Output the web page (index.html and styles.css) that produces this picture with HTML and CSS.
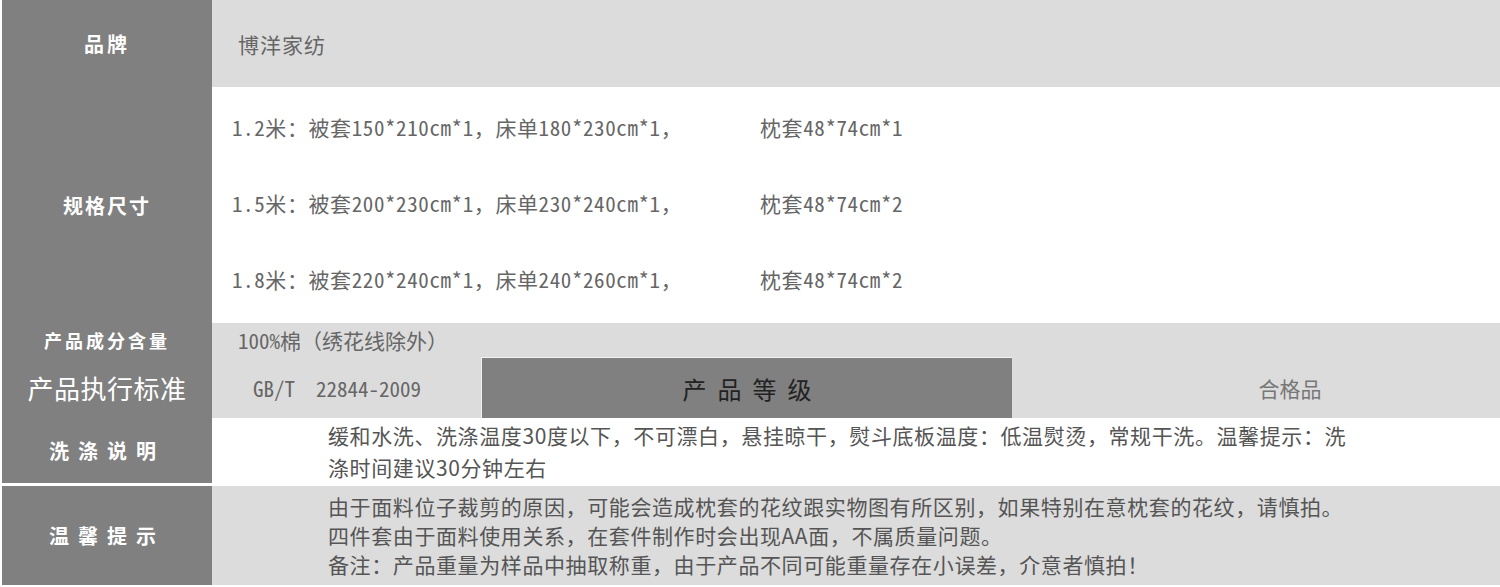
FILE: index.html
```html
<!DOCTYPE html>
<html lang="zh-CN">
<head>
    <meta charset="UTF-8">
    <meta name="viewport" content="width=device-width, initial-scale=1.0">
    <title>产品信息</title>
    <link rel="stylesheet" href="styles.css">
</head>
<body>

    <div class="sheet">
        <div class="row row-brand">
            <div class="label">品牌</div>
            <div class="value value-grey">博洋家纺</div>
        </div>

        <div class="row row-size">
            <div class="label">规格尺寸</div>
            <div class="value size-list">
                <div class="size-line"><span class="size-main">1.2米：被套150*210cm*1，床单180*230cm*1，</span><span>枕套48*74cm*1</span></div>
                <div class="size-line"><span class="size-main">1.5米：被套200*230cm*1，床单230*240cm*1，</span><span>枕套48*74cm*2</span></div>
                <div class="size-line"><span class="size-main">1.8米：被套220*240cm*1，床单240*260cm*1，</span><span>枕套48*74cm*2</span></div>
            </div>
        </div>

        <div class="row row-material">
            <div class="label label-small">产品成分含量</div>
            <div class="value value-grey mono">100%棉（绣花线除外）</div>
        </div>

        <div class="row row-standard">
            <div class="label label-large">产品执行标准</div>
            <div class="value value-grey standard">
                <div class="std-code mono">GB/T&nbsp;&nbsp;22844-2009</div>
                <div class="grade-title">产品等级</div>
                <div class="grade-value">合格品</div>
            </div>
        </div>

        <div class="row row-wash">
            <div class="label label-spaced">洗涤说明</div>
            <div class="value note">
                缓和水洗、洗涤温度30度以下，不可漂白，悬挂晾干，熨斗底板温度：低温熨烫，常规干洗。温馨提示：洗<br>
                涤时间建议30分钟左右
            </div>
        </div>

        <div class="row row-tips">
            <div class="label label-spaced">温馨提示</div>
            <div class="value value-grey note tips">
                由于面料位子裁剪的原因，可能会造成枕套的花纹跟实物图有所区别，如果特别在意枕套的花纹，请慎拍。<br>
                四件套由于面料使用关系，在套件制作时会出现AA面，不属质量问题。<br>
                备注：产品重量为样品中抽取称重，由于产品不同可能重量存在小误差，介意者慎拍！
            </div>
        </div>
    </div>

</body>
</html>
```

FILE: styles.css
```css
body {
    margin: 0;
    padding: 0;
    background: #fff;
    font-family: "Noto Sans CJK SC", "Noto Sans", sans-serif;
    color: #666;
}
.sheet {
    padding-left: 2px;
}
.row {
    display: grid;
    grid-template-columns: 210px 1fr;
}
.label {
    background-color: #808080;
    color: #fff;
    font-size: 20px;
    font-weight: bold;
    letter-spacing: 2px;
    display: flex;
    align-items: center;
    justify-content: center;
}
.label-small {
    font-size: 18px;
    letter-spacing: 3px;
}
.label-large {
    font-size: 26px;
    font-weight: normal;
    letter-spacing: 0.5px;
}
.label-spaced {
    letter-spacing: 9px;
}
.value {
    display: flex;
    align-items: center;
    font-size: 21px;
}
.value-grey {
    background-color: #dcdcdc;
}
.mono {
    font-family: "Noto Sans Mono CJK SC", "Noto Sans CJK SC", "Liberation Mono", monospace;
}

.row-brand {
    height: 87px;
}
.row-brand .label {
    letter-spacing: 3px;
}
.row-brand .value {
    padding-left: 26px;
    letter-spacing: 1px;
}

.row-size {
    height: 236px;
}
.size-list {
    flex-direction: column;
    align-items: flex-start;
    justify-content: flex-start;
    padding: 25px 0 0 20px;
    gap: 46px;
    font-family: "Noto Sans Mono CJK SC", "Noto Sans CJK SC", "Liberation Mono", monospace;
    letter-spacing: 0.6px;
}
.size-line {
    line-height: 30px;
    white-space: nowrap;
}
.size-main {
    display: inline-block;
    width: 528px;
}

.row-material {
    height: 34px;
}
.row-material .value {
    padding-left: 26px;
}

.row-standard {
    height: 61px;
}
.standard {
    display: grid;
    grid-template-columns: 269px 531px 1fr;
    align-items: stretch;
}
.std-code {
    display: flex;
    align-items: center;
    padding-left: 41px;
}
.grade-title {
    background-color: #808080;
    border-top: 1px solid #f2f2f2;
    border-left: 1px solid #f2f2f2;
    color: #222;
    font-size: 24px;
    letter-spacing: 11px;
    padding-left: 11px;
    display: flex;
    align-items: center;
    justify-content: center;
}
.grade-value {
    display: flex;
    align-items: center;
    justify-content: center;
    padding-left: 68px;
    color: #777;
}

.note {
    display: block;
    padding-left: 116px;
    color: #555;
    letter-spacing: 0.6px;
}
.row-wash {
    height: 63px;
}
.row-wash .note {
    padding-top: 1px;
    line-height: 32px;
}
.row-tips {
    height: 99px;
    margin-top: 5px;
}
.tips {
    padding-top: 6px;
    line-height: 29px;
}
```
